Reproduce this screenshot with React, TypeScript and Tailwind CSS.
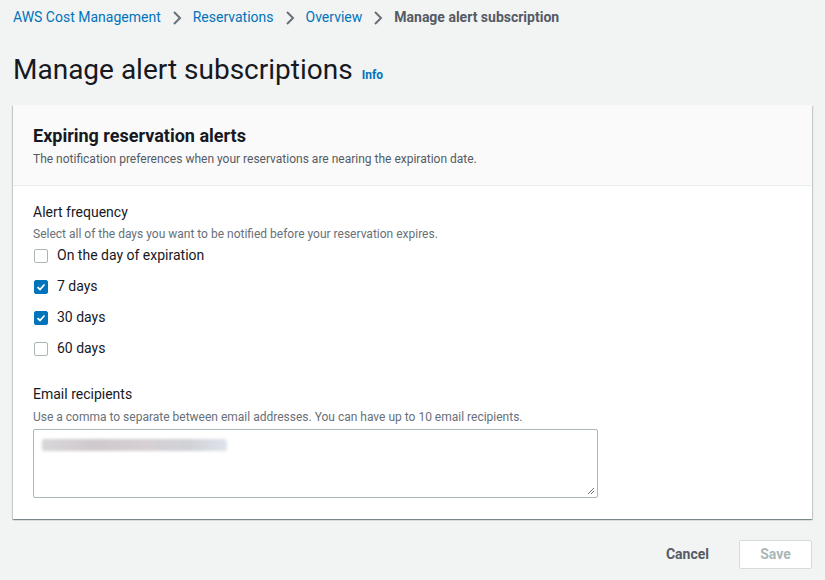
import { useState } from "react";

const DAYS = [
  { id: "day0", label: "On the day of expiration", checked: false },
  { id: "day7", label: "7 days", checked: true },
  { id: "day30", label: "30 days", checked: true },
  { id: "day60", label: "60 days", checked: false },
];

function Chevron() {
  return (
    <svg width="10" height="16" viewBox="0 0 10 16" className="mx-[11px] shrink-0">
      <path d="M2 2 L8 8 L2 14" fill="none" stroke="#687078" strokeWidth="2" />
    </svg>
  );
}

function Checkbox({ checked, onChange }: { checked: boolean; onChange: () => void }) {
  return (
    <button
      type="button"
      onClick={onChange}
      className={`w-[14px] h-[14px] rounded-[2px] flex items-center justify-center shrink-0 ${
        checked ? "bg-[#0073bb] border border-[#0073bb]" : "bg-white border border-[#aab7b8]"
      }`}
    >
      {checked && (
        <svg width="10" height="10" viewBox="0 0 10 10">
          <path d="M1.5 5.2 L4 7.5 L8.5 2.5" fill="none" stroke="white" strokeWidth="1.8" />
        </svg>
      )}
    </button>
  );
}

export default function App() {
  const [days, setDays] = useState(DAYS);

  return (
    <div className="min-h-[580px] w-full bg-[#f2f3f3] px-[13px] font-['Roboto',sans-serif] text-[#16191f]">
      {/* breadcrumbs */}
      <nav className="flex items-center h-[35px] text-[14px]">
        <a className="text-[#0073bb]">AWS Cost Management</a>
        <Chevron />
        <a className="text-[#0073bb]">Reservations</a>
        <Chevron />
        <a className="text-[#0073bb]">Overview</a>
        <Chevron />
        <span className="font-bold text-[#545b64]">Manage alert subscription</span>
      </nav>

      <div className="flex items-baseline gap-[9px] mt-[15px] mb-[15px]">
        <h1 className="text-[28px] leading-[40px] font-normal">Manage alert subscriptions</h1>
        <a className="text-[12px] font-bold text-[#0073bb]">Info</a>
      </div>

      <section className="bg-white shadow-[0_1px_1px_0_rgba(0,28,36,0.3),1px_1px_1px_0_rgba(0,28,36,0.15),-1px_1px_1px_0_rgba(0,28,36,0.15)]">
        <header className="bg-[#fafafa] border-b border-[#eaeded] px-[20px] pt-[20px] pb-[17px]">
          <h2 className="text-[18px] leading-[22px] font-bold">Expiring reservation alerts</h2>
          <p className="text-[12px] leading-[18px] mt-[3px] text-[#545b64]">
            The notification preferences when your reservations are nearing the expiration date.
          </p>
        </header>

        <div className="px-[20px] pt-[16px] pb-[21px]">
          <div className="text-[14px] leading-[20px]">Alert frequency</div>
          <div className="text-[12px] leading-[18px] text-[#687078] mt-[3px]">
            Select all of the days you want to be notified before your reservation expires.
          </div>
          <div className="flex flex-col mt-[-3px]">
            {days.map((d, i) => (
              <label key={d.id} className="flex items-center gap-[9px] h-[31px] pl-[1px]">
                <Checkbox
                  checked={d.checked}
                  onChange={() =>
                    setDays(days.map((x, j) => (j === i ? { ...x, checked: !x.checked } : x)))
                  }
                />
                <span className="text-[14px]">{d.label}</span>
              </label>
            ))}
          </div>

          <div className="text-[14px] leading-[20px] mt-[20px]">Email recipients</div>
          <div className="text-[12px] leading-[18px] text-[#687078] mt-[4px]">
            Use a comma to separate between email addresses. You can have up to 10 email recipients.
          </div>
          <div className="relative mt-[3px] w-[565px] h-[69px] border border-[#aab7b8] rounded-[2px] bg-white">
            <div className="absolute left-[8px] top-[9px] h-[12px] w-[185px] rounded-[2px] bg-[linear-gradient(90deg,#d8d6d8,#cfc8cc_30%,#d6d0d4_55%,#d0d2d8_80%,#dfe3ea)] blur-[1.5px]" />
            <svg width="8" height="8" viewBox="0 0 8 8" className="absolute right-[2px] bottom-[2px]">
              <path d="M7 1 L1 7 M7 4 L4 7" stroke="#687078" strokeWidth="1" />
            </svg>
          </div>
        </div>
      </section>

      <div className="flex items-center justify-end gap-[30px] mt-[21px]">
        <button className="text-[14px] font-bold text-[#545b64]">Cancel</button>
        <button className="w-[73px] h-[29px] bg-white border border-[#d5dbdb] rounded-[2px] text-[14px] font-bold text-[#aab7b8]">
          Save
        </button>
      </div>
    </div>
  );
}
